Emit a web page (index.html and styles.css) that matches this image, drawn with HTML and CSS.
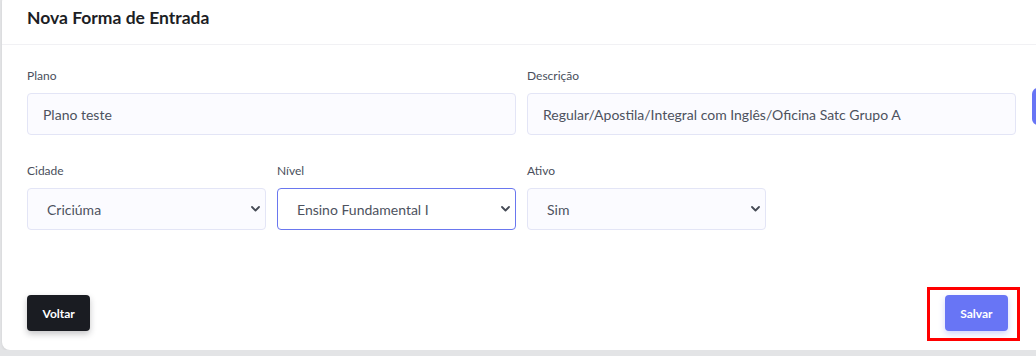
FILE: index.html
```html
<!DOCTYPE html>
<html lang="pt-BR">
  <head>
    <meta charset="utf-8" />
    <meta name="viewport" content="width=device-width,initial-scale=1.0" />
    <title>Nova Forma de Entrada</title>
    <link rel="stylesheet" href="styles.css">
  </head>
  <body>
    <div class="card">
      <div class="card-header">
        <h2 class="title">Nova Forma de Entrada</h2>
      </div>
      <form class="card-body" action="">
        <div class="row">
          <div class="field field-wide">
            <label class="label" for="plano">Plano</label>
            <input class="control" id="plano" value="Plano teste" />
          </div>
          <div class="field field-wide">
            <label class="label" for="descricao">Descrição</label>
            <input class="control" id="descricao" value="Regular/Apostila/Integral com Inglês/Oficina Satc Grupo A" />
          </div>
          <button class="btn-side" type="button" title="Adicionar"></button>
        </div>
        <div class="row row-second">
          <div class="field">
            <label class="label" for="cidade">Cidade</label>
            <div class="select-wrap">
              <select class="control select" id="cidade">
                <option>Criciúma</option>
              </select>
              <svg class="chevron" width="9" height="6" viewBox="0 0 9 6"><path d="M1 1l3.5 3.5L8 1" fill="none" stroke="#454a55" stroke-width="1.8" stroke-linecap="round" stroke-linejoin="round"/></svg>
            </div>
          </div>
          <div class="field">
            <label class="label" for="nivel">Nível</label>
            <div class="select-wrap">
              <select class="control select focused" id="nivel">
                <option>Ensino Fundamental I</option>
              </select>
              <svg class="chevron" width="9" height="6" viewBox="0 0 9 6"><path d="M1 1l3.5 3.5L8 1" fill="none" stroke="#454a55" stroke-width="1.8" stroke-linecap="round" stroke-linejoin="round"/></svg>
            </div>
          </div>
          <div class="field">
            <label class="label" for="ativo">Ativo</label>
            <div class="select-wrap">
              <select class="control select" id="ativo">
                <option>Sim</option>
                <option>Não</option>
              </select>
              <svg class="chevron" width="9" height="6" viewBox="0 0 9 6"><path d="M1 1l3.5 3.5L8 1" fill="none" stroke="#454a55" stroke-width="1.8" stroke-linecap="round" stroke-linejoin="round"/></svg>
            </div>
          </div>
        </div>
        <div class="actions">
          <button class="btn btn-dark" type="button">Voltar</button>
          <span class="highlight">
            <button class="btn btn-primary" type="submit">Salvar</button>
          </span>
        </div>
      </form>
    </div>
  </body>
</html>
```

FILE: styles.css
```css
body {
  margin: 0;
  background: #e3e4e6;
  overflow: hidden;
  font-family: Lato, "Open Sans", Arial, sans-serif;
}

.card {
  margin: -6px 0 0 2px;
  width: 1042px;
  height: 356px;
  box-sizing: border-box;
  background: #fff;
  border-radius: 8px;
  box-shadow: 0 1px 3px rgba(0, 0, 0, 0.08);
}

.card-header {
  padding: 12px 25px 14px;
  border-bottom: 1px solid #f1f1f4;
}
.title {
  margin: 0;
  font-size: 17.5px;
  line-height: 24px;
  font-weight: 700;
  color: #1c1e25;
}

.card-body {
  padding: 23px 36px 0 25px;
}

.row {
  display: flex;
  gap: 11px;
}
.row-second {
  margin-top: 28px;
}

.field {
  display: flex;
  flex-direction: column;
  flex-shrink: 0;
  width: 239px;
}
.field-wide {
  width: 489px;
}

.label {
  font-size: 12px;
  line-height: 16px;
  color: #4a4f5c;
  margin-bottom: 9px;
}

.control {
  box-sizing: border-box;
  height: 42px;
  width: 100%;
  padding: 0 15px;
  border: 1px solid #e3e5f6;
  border-radius: 4px;
  background: #fbfbff;
  font-family: inherit;
  font-size: 14px;
  color: #4d525e;
}
.control:focus {
  outline: none;
}

.select-wrap {
  position: relative;
}
.select {
  appearance: none;
  -webkit-appearance: none;
  padding-left: 19px;
}
.select.focused {
  border-color: #6a77ef;
  background: #fff;
}
.chevron {
  position: absolute;
  right: 6px;
  top: 18px;
  pointer-events: none;
}

.btn-side {
  flex-shrink: 0;
  margin: 20px 0 0 5px;
  width: 40px;
  height: 37px;
  border: none;
  border-radius: 6px;
  background: #6875f5;
}

.actions {
  margin-top: 65px;
  display: flex;
  justify-content: space-between;
  align-items: center;
}

.btn {
  height: 36px;
  padding: 0 15.5px;
  border: none;
  border-radius: 4px;
  font-family: inherit;
  font-size: 12px;
  font-weight: 700;
  color: #fff;
}
.btn-dark {
  background: #1a1c22;
  box-shadow: 0 3px 6px rgba(26, 28, 34, 0.25);
}
.btn-primary {
  background: #6875f5;
  box-shadow: 0 3px 6px rgba(104, 117, 245, 0.3);
}

.highlight {
  position: relative;
  display: inline-flex;
}
.highlight::after {
  content: "";
  position: absolute;
  left: -18px;
  right: -12px;
  top: -8px;
  bottom: -10px;
  border: 3px solid #f00;
}
```
